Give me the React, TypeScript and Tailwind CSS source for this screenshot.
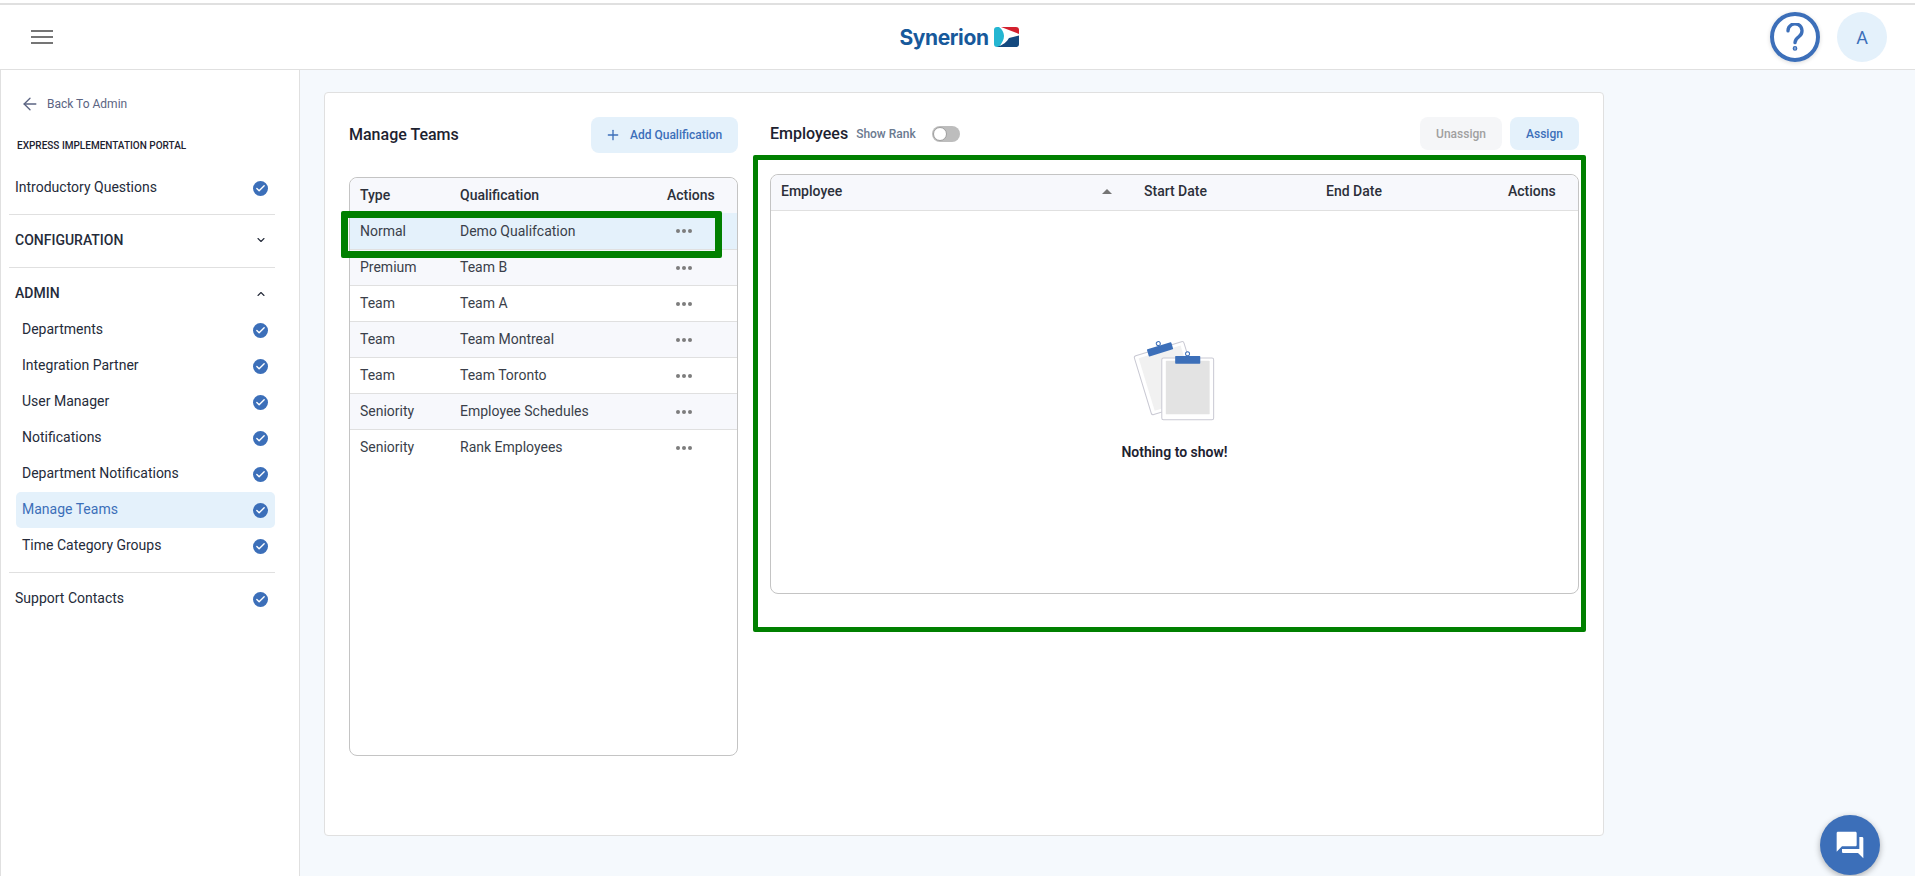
import { ArrowLeft, Check, ChevronDown, ChevronUp, Plus } from 'lucide-react'

const adminItems = [
  'Departments',
  'Integration Partner',
  'User Manager',
  'Notifications',
  'Department Notifications',
  'Manage Teams',
  'Time Category Groups',
]

const qualifications = [
  { type: 'Normal', name: 'Demo Qualifcation' },
  { type: 'Premium', name: 'Team B' },
  { type: 'Team', name: 'Team A' },
  { type: 'Team', name: 'Team Montreal' },
  { type: 'Team', name: 'Team Toronto' },
  { type: 'Seniority', name: 'Employee Schedules' },
  { type: 'Seniority', name: 'Rank Employees' },
]

function CheckBadge() {
  return (
    <span className="mt-[2px] flex h-[15px] w-[15px] items-center justify-center rounded-full bg-[#3c6fb9]">
      <Check size={11} strokeWidth={3} className="text-white" />
    </span>
  )
}

function Dots() {
  return (
    <span className="flex w-[16px] justify-between">
      <span className="h-[4px] w-[4px] rounded-full bg-[#7d7d7d]" />
      <span className="h-[4px] w-[4px] rounded-full bg-[#7d7d7d]" />
      <span className="h-[4px] w-[4px] rounded-full bg-[#7d7d7d]" />
    </span>
  )
}

function LogoMark() {
  return (
    <svg width="25" height="20" viewBox="0 0 25 20">
      <defs>
        <clipPath id="logo-clip">
          <rect x="0" y="0" width="25" height="20" rx="3" />
        </clipPath>
      </defs>
      <g clipPath="url(#logo-clip)">
        <path d="M0 0h5c3 2 5 5.500 5 9s-2 7-5 11H0z" fill="#24b6d2" />
        <path d="M7 0h18v7z" fill="#d3202e" />
        <path d="M25 8.500V20H3c6-2 10-5 12-9z" fill="#14497f" />
      </g>
    </svg>
  )
}

function Clipboards() {
  return (
    <svg width="87" height="87" viewBox="120 50 260 260" className="mr-[2px]">
      <g transform="rotate(-17 232.5 176)">
        <rect x="155" y="84" width="155" height="184" rx="6" fill="#fff" stroke="#c9c9d3" strokeWidth="3" />
        <rect x="167" y="94" width="131" height="164" fill="#f1f1f1" />
        <circle cx="236" cy="69" r="6" fill="#fff" stroke="#3c6fb9" strokeWidth="3" />
        <rect x="198" y="76" width="76" height="22" rx="2" fill="#3c6fb9" />
      </g>
      <rect x="215" y="116" width="155" height="184" rx="5" fill="#fff" stroke="#c9c9d3" strokeWidth="3" />
      <rect x="227" y="124" width="131" height="160" rx="2" fill="#e3e3e3" />
      <circle cx="292" cy="103" r="6" fill="#fff" stroke="#3c6fb9" strokeWidth="3" />
      <rect x="255" y="110" width="75" height="23" rx="2" fill="#3c6fb9" />
    </svg>
  )
}

function Sidebar() {
  return (
    <aside className="flex w-[300px] shrink-0 flex-col border-x border-[#e0e0e0] bg-white pl-[8px] pr-[24px] text-[14px] text-[#252b3a]">
      <div className="mt-[24px] flex h-[20px] items-center gap-[7px] pl-[11px] text-[12px] text-[#5b6482]">
        <ArrowLeft size={20} strokeWidth={1.6} />
        Back To Admin
      </div>
      <div className="mt-[25px] pl-[8px] text-[10px] font-medium leading-[14px] text-[#1d2230]">EXPRESS IMPLEMENTATION PORTAL</div>
      <div className="flex h-[62px] items-center justify-between border-b border-[#e0e0e0] pl-[6px] pr-[7px] pt-[8px]">
        Introductory Questions
        <CheckBadge />
      </div>
      <div className="flex h-[53px] items-center justify-between border-b border-[#e0e0e0] pb-[2px] pl-[6px] pr-[8px] font-medium">
        CONFIGURATION
        <ChevronDown size={12} strokeWidth={2.2} />
      </div>
      <div className="flex h-[44px] items-center justify-between pl-[6px] pr-[8px] pt-[7px] font-medium">
        ADMIN
        <ChevronUp size={12} strokeWidth={2.2} />
      </div>
      <div className="flex flex-col border-b border-[#e0e0e0] pb-[8px]">
        {adminItems.map(item => (
          <div
            key={item}
            className={
              item === 'Manage Teams'
                ? 'ml-[7px] flex h-[36px] items-center justify-between rounded-[5px] bg-[#e4f1fb] pb-[2px] pl-[6px] pr-[7px] text-[#3c6fb9]'
                : 'ml-[7px] flex h-[36px] items-center justify-between pb-[2px] pl-[6px] pr-[7px]'
            }
          >
            {item}
            <CheckBadge />
          </div>
        ))}
      </div>
      <div className="flex h-[50px] items-center justify-between pl-[6px] pr-[7px]">
        Support Contacts
        <CheckBadge />
      </div>
    </aside>
  )
}

function TeamsPanel() {
  return (
    <section className="flex w-[389px] shrink-0 flex-col">
      <div className="flex h-[36px] items-center justify-between">
        <h2 className="text-[16px] font-medium text-[#1d2230]">Manage Teams</h2>
        <button className="flex h-[36px] w-[147px] items-center gap-[9px] rounded-[8px] bg-[#e4f1fb] pl-[14px] text-[12px] font-medium text-[#3c6fb9]">
          <Plus size={16} strokeWidth={2} />
          Add Qualification
        </button>
      </div>
      <div className="relative mt-[24px] h-[579px] rounded-[8px] border border-[#c4c4c4] text-[14px] text-[#3a3f4a]">
        <div className="flex h-[35px] items-center rounded-t-[8px] bg-[#f7f8fc] font-medium text-[#2c303a]">
          <span className="w-[110px] pl-[10px]">Type</span>
          <span className="flex-1">Qualification</span>
          <span className="w-[70px]">Actions</span>
        </div>
        {qualifications.map((row, i) => (
          <div
            key={row.name}
            className={
              i === 0
                ? 'flex h-[36px] items-center bg-[#e4f1fb]'
                : i % 2 === 1
                  ? 'flex h-[36px] items-center border-t border-[#e0e0e0] bg-[#f7f8fc]'
                  : 'flex h-[36px] items-center border-t border-[#e0e0e0]'
            }
          >
            <span className="w-[110px] pl-[10px]">{row.type}</span>
            <span className="flex-1">{row.name}</span>
            <span className="w-[71px] pl-[10px]">
              <Dots />
            </span>
          </div>
        ))}
        {/* annotation box drawn over the selected row */}
        <div className="absolute left-[-9px] top-[33px] h-[47px] w-[381px] rounded-[2px] border-[7px] border-[#008000]" />
      </div>
    </section>
  )
}

function EmployeesPanel() {
  return (
    <section className="relative flex w-[809px] shrink-0 flex-col">
      <div className="flex h-[33px] items-center">
        <h2 className="text-[16px] font-medium text-[#1d2230]">Employees</h2>
        <span className="ml-[8px] text-[12px] font-medium text-[#6b7a90]">Show Rank</span>
        <span className="relative ml-[16px] h-[16px] w-[28px] rounded-full bg-[#bdbdbd]">
          <span className="absolute left-[1px] top-[1px] h-[14px] w-[14px] rounded-full border border-[#9e9e9e] bg-white" />
        </span>
        <button className="ml-auto h-[33px] w-[82px] rounded-[8px] bg-[#f5f6f8] text-[12px] font-medium text-[#a0a0a0]">Unassign</button>
        <button className="ml-[8px] h-[33px] w-[69px] rounded-[8px] bg-[#e4f1fb] text-[12px] font-medium text-[#3c6fb9]">Assign</button>
      </div>
      <div className="mt-[24px] h-[420px] rounded-[8px] border border-[#c4c4c4]">
        <div className="flex h-[36px] items-center rounded-t-[8px] border-b border-[#e0e0e0] bg-[#f7f8fc] pb-[2px] text-[14px] font-medium text-[#2c303a]">
          <span className="flex w-[373px] items-center justify-between pl-[10px] pr-[32px]">
            Employee
            <svg width="10" height="5" viewBox="0 0 10 5">
              <path d="M0 5 5 0l5 5z" fill="#757575" />
            </svg>
          </span>
          <span className="w-[182px]">Start Date</span>
          <span className="w-[182px]">End Date</span>
          <span>Actions</span>
        </div>
        <div className="flex flex-col items-center pt-[125px]">
          <Clipboards />
          <p className="mt-[19px] text-[14px] font-semibold leading-[20px] text-[#1d2230]">Nothing to show!</p>
        </div>
      </div>
      {/* annotation box drawn around the employee table */}
      <div className="absolute left-[-17px] top-[38px] h-[477px] w-[833px] rounded-[2px] border-[5px] border-[#008000]" />
    </section>
  )
}

export default function App() {
  return (
    <div className="relative flex h-screen flex-col overflow-hidden bg-[#f5f9fd] font-['Roboto',sans-serif]">
      <div className="h-[3px] shrink-0 bg-white" />
      <header className="flex h-[67px] shrink-0 items-center border-t-2 border-b border-[#e0e0e0] bg-white pl-[31px] pr-[28px]">
        <div className="flex-1">
          <svg width="22" height="14" viewBox="0 0 22 14" className="block text-[#757575]">
            <path d="M0 0h22v2H0zM0 6h22v2H0zM0 12h22v2H0z" fill="currentColor" />
          </svg>
        </div>
        <div className="flex items-center gap-[5px]">
          <span className="font-['Inter',sans-serif] text-[21px] font-bold leading-none tracking-[-0.4px] text-[#17599b]">Synerion</span>
          <LogoMark />
        </div>
        <div className="flex flex-1 items-center justify-end gap-[17px]">
          <span className="flex h-[50px] w-[50px] items-center justify-center rounded-full border-[4px] border-[#3c6fb9] text-[#3c6fb9] shadow-[0_1px_4px_rgba(0,0,0,0.15)]">
            <svg width="18" height="28" viewBox="0 0 20 32" fill="none" stroke="currentColor" strokeWidth="3.800" strokeLinecap="round">
              <path d="M2 9a8 8 0 1 1 12.500 6.500C11.500 17.600 10 19 10 22.500" />
              <circle cx="10" cy="29" r="0.8" fill="currentColor" />
            </svg>
          </span>
          <span className="flex h-[50px] w-[50px] items-center justify-center rounded-full bg-[#e4f1fb] text-[18px] text-[#3c6fb9]">A</span>
        </div>
      </header>
      <div className="flex min-h-0 flex-1">
        <Sidebar />
        <main className="min-w-0 flex-1 pl-[24px] pt-[22px]">
          <div className="flex h-[744px] w-[1280px] gap-[32px] rounded-[4px] border border-[#e0e0e0] bg-white pl-[24px] pt-[24px]">
            <TeamsPanel />
            <EmployeesPanel />
          </div>
        </main>
      </div>
      <button className="absolute bottom-[1px] right-[35px] flex h-[60px] w-[60px] items-center justify-center rounded-full bg-[#3c6fb9] shadow-[0_2px_6px_rgba(0,0,0,0.3)]">
        <svg width="32" height="32" viewBox="0 0 24 24" fill="#fff">
          <path d="M21 6h-2v9H6v2c0 .55.45 1 1 1h11l4 4V7c0-.55-.45-1-1-1zm-4 6V3c0-.55-.45-1-1-1H3c-.55 0-1 .45-1 1v14l4-4h10c.55 0 1-.45 1-1z" />
        </svg>
      </button>
    </div>
  )
}
